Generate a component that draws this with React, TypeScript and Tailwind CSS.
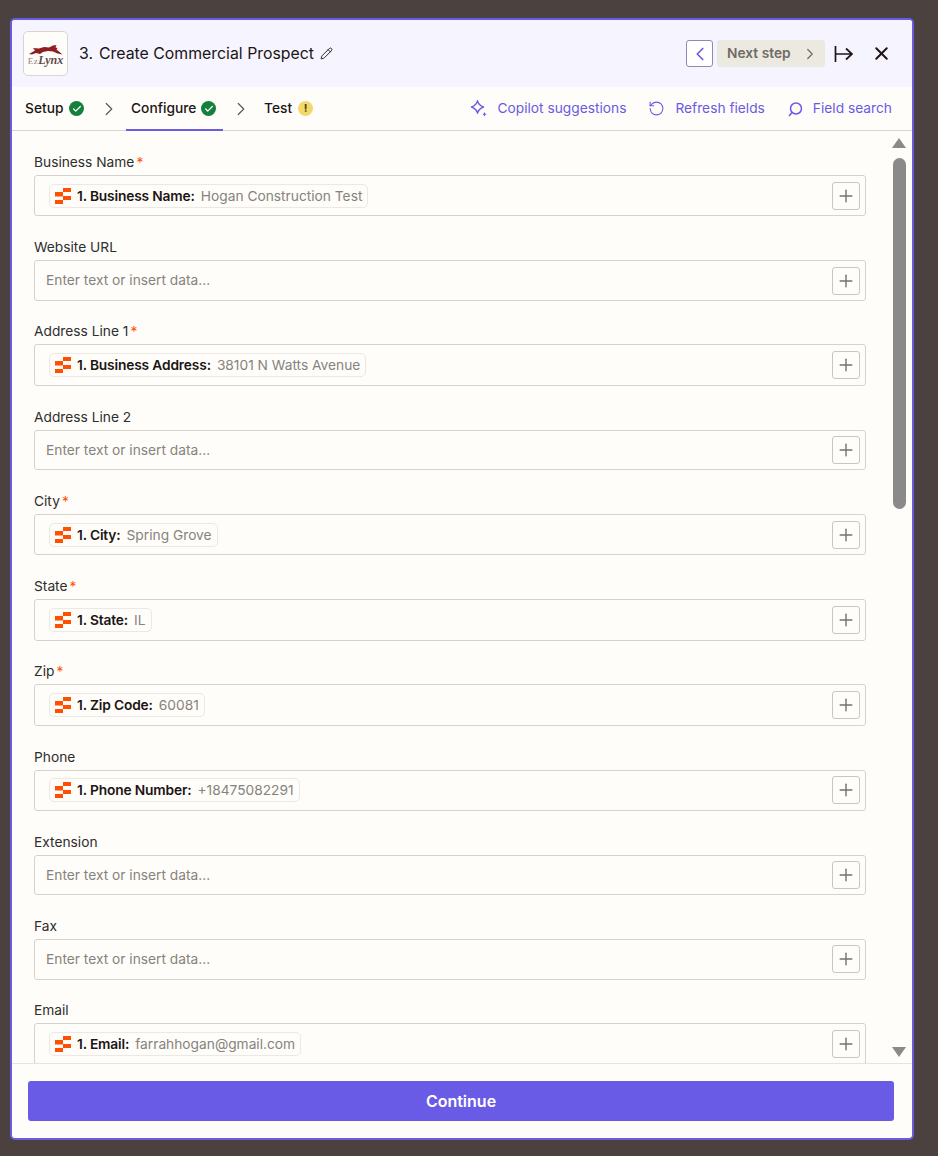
import React from 'react';
import { ChevronLeft, ChevronRight, Check, Pencil, Plus, RotateCcw, X } from 'lucide-react';

type Field = {
  label: string;
  required?: boolean;
  chip?: string;
  value?: string;
};

const fields: Field[] = [
  { label: 'Business Name', required: true, chip: '1. Business Name:', value: 'Hogan Construction Test' },
  { label: 'Website URL' },
  { label: 'Address Line 1', required: true, chip: '1. Business Address:', value: '38101 N Watts Avenue' },
  { label: 'Address Line 2' },
  { label: 'City', required: true, chip: '1. City:', value: 'Spring Grove' },
  { label: 'State', required: true, chip: '1. State:', value: 'IL' },
  { label: 'Zip', required: true, chip: '1. Zip Code:', value: '60081' },
  { label: 'Phone', chip: '1. Phone Number:', value: '+18475082291' },
  { label: 'Extension' },
  { label: 'Fax' },
  { label: 'Email', chip: '1. Email:', value: 'farrahhogan@gmail.com' },
];

const AppMark = () => (
  <svg width="16" height="16" viewBox="0 0 16 16" className="shrink-0">
    <path fill="#ff4f00" d="M8 0h8v4H8zM0 4h8v4.5H0zM8 8h8v4H8zM0 12h8v4H0z" />
  </svg>
);

const StatusOk = () => (
  <span className="flex h-[15px] w-[15px] items-center justify-center rounded-full bg-[#14803c]">
    <Check size={10} strokeWidth={3} className="text-white" />
  </span>
);

const Logo = () => (
  <div className="flex h-[45px] w-[45px] shrink-0 flex-col items-center justify-center rounded-[5px] border border-[#d8d5cf] bg-[#fffdf9] pt-[5px]">
    <svg width="34" height="10" viewBox="0 0 34 10">
      <path
        fill="#8f1d22"
        d="M0 9 6 5.500 4 3 10 3.500 15 2 20 2.500 24 .5 27.500 0 26.500 2.500 28.500 3 27.500 4.500 30 6.500 33.500 9.500 28.500 8.500 24 6.500 19 6 14 7 11 9 7 8 3 9.500Z"
      />
    </svg>
    <div className="mt-[-2px] font-['Liberation_Serif',serif] leading-[11px]">
      <span className="text-[9px] tracking-[0.5px] text-[#8a8684]">Ez</span>
      <span className="text-[12px] font-bold italic text-[#5f4b4c]">Lynx</span>
    </div>
  </div>
);

const FieldRow = ({ field }: { field: Field }) => (
  <div className={field.chip ? 'h-[85.25px] shrink-0' : 'h-[84.2px] shrink-0'}>
    <div className="flex h-[20px] items-center text-[13.75px] leading-[20px] text-[#2d2e2e]">
      {field.label}
      {field.required && <span className="ml-[2px] text-[#ff4f00]">*</span>}
    </div>
    <div
      className={`mt-[3px] flex items-center justify-between rounded-[3px] border border-[#d6d3cc] bg-[#fffdf9] pl-[11px] pr-[5px] ${
        field.chip ? 'h-[41.4px]' : 'h-[40.5px]'
      }`}
    >
      {field.chip ? (
        <div className="ml-[3px] flex h-[24px] items-center gap-[6px] rounded-[5px] border border-[#ebe9e3] px-[5px] text-[13.75px] leading-[20px]">
          <AppMark />
          <span className="font-semibold tracking-[-0.15px] text-[#201515]">{field.chip}</span>
          <span className="text-[#86837e]">{field.value}</span>
        </div>
      ) : (
        <span className="text-[13.75px] text-[#86837e]">Enter text or insert data...</span>
      )}
      <button className="flex h-[28px] w-[28px] items-center justify-center rounded-[3px] border border-[#c9c6bf] bg-[#fffdf9]">
        <Plus size={20} strokeWidth={1.7} className="text-[#75726d]" />
      </button>
    </div>
  </div>
);

export default function App() {
  return (
    <div className="h-[1156px] w-[938px] overflow-hidden bg-[#4b4240] pb-[16px] pl-[10px] pr-[24px] pt-[18px] font-['Inter',sans-serif]">
      <div className="flex h-[1122px] flex-col overflow-hidden rounded-[5px] border-2 border-[#6a5be2] bg-[#fffdf9]">
        <header className="flex h-[67px] shrink-0 items-center bg-[#f6f4ff] pl-[11px] pr-[20px]">
          <Logo />
          <div className="ml-[11px] flex items-center text-[15.85px] text-[#201515]">
            <span>3.</span>
            <span className="ml-[6px]">Create Commercial Prospect</span>
            <Pencil size={13} strokeWidth={1.7} className="ml-[6px]" />
          </div>
          <div className="ml-auto flex items-center">
            <button className="flex h-[27px] w-[27px] items-center justify-center rounded-[3px] border border-[#8f8ab5] bg-white">
              <ChevronLeft size={22} strokeWidth={1.8} className="text-[#6a5be2]" />
            </button>
            <div className="ml-[4px] flex h-[27px] w-[108px] items-center rounded-[3px] bg-[#ece9e1] pl-[10px] text-[13.75px] font-semibold text-[#6f6b65]">
              Next step
              <ChevronRight size={18} strokeWidth={1.6} className="ml-[10px]" />
            </div>
            <svg width="20" height="18" viewBox="0 0 20 18" fill="none" stroke="#201515" strokeWidth="1.7" className="ml-[9px]">
              <path d="M1.500 1v16M2 9h16M12 3.500 18 9l-6 5.500" />
            </svg>
            <X size={21} strokeWidth={2.3} className="ml-[17px] text-[#201515]" />
          </div>
        </header>

        <nav className="flex h-[44px] shrink-0 items-center border-b border-[#d9d6cf] pl-[13px] pr-[20px] text-[13.75px]">
          <span className="w-[38px] font-medium text-[#201515]">Setup</span>
          <span className="ml-[6px]"><StatusOk /></span>
          <ChevronRight size={22} strokeWidth={1.3} className="ml-[14px] text-[#5c5a56]" />
          <div className="relative ml-[6px] flex h-full items-center pl-[5px] pr-[7px]">
            <span className="w-[65px] whitespace-nowrap font-medium text-[#201515]">Configure</span>
            <span className="ml-[5px]"><StatusOk /></span>
            <span className="absolute bottom-[-1px] left-0 h-[2px] w-full bg-[#6a5be2]" />
          </div>
          <ChevronRight size={22} strokeWidth={1.3} className="ml-[7px] text-[#5c5a56]" />
          <span className="ml-[12px] w-[28px] font-medium text-[#201515]">Test</span>
          <span className="ml-[6px] flex h-[15px] w-[15px] items-center justify-center rounded-full bg-[#f3d86b] text-[11px] font-bold leading-none text-[#4d3f10]">!</span>
          <div className="ml-auto flex items-center text-[#6a5be2]">
            <svg width="17" height="17" viewBox="0 0 17 17" fill="none" stroke="currentColor" strokeWidth="1.4">
              <path d="M7.500.8Q8.500 5 13.500 7Q8.500 9 7.500 13.200Q6.500 9 1.500 7Q6.500 5 7.500.8Z" strokeLinejoin="round" />
              <path d="M14.500 12.500v3.500M12.800 14.200h3.400" strokeWidth="1.100" />
            </svg>
            <span className="ml-[10px]">Copilot suggestions</span>
            <RotateCcw size={17} strokeWidth={1.5} className="ml-[22px]" />
            <span className="ml-[10px]">Refresh fields</span>
            <svg width="15" height="16" viewBox="0 0 15 16" fill="none" stroke="currentColor" strokeWidth="1.500" className="ml-[23px]">
              <circle cx="8" cy="7.500" r="5.500" />
              <path d="M4 11.500 1 15" />
            </svg>
            <span className="ml-[10px]">Field search</span>
          </div>
        </nav>

        <div className="flex min-h-0 flex-1">
          <div className="flex min-w-0 flex-1 flex-col overflow-hidden pl-[22px] pr-[19px] pt-[21px]">
            {fields.map((field) => (
              <FieldRow key={field.label} field={field} />
            ))}
          </div>
          <div className="flex w-[27px] shrink-0 flex-col items-center pl-[1px] pt-[7px]">
            <div className="h-0 w-0 border-x-[7.5px] border-b-[10px] border-x-transparent border-b-[#8a8a8a]" />
            <div className="mt-[10px] h-[351px] w-[13px] rounded-[7px] bg-[#8a8a8a]" />
            <div className="mb-[6px] mt-auto h-0 w-0 border-x-[7.5px] border-t-[10px] border-x-transparent border-t-[#8a8a8a]" />
          </div>
        </div>

        <footer className="shrink-0 border-t border-[#e6e4de] pb-[17px] pl-[16px] pr-[18px] pt-[17px]">
          <button className="flex h-[40px] w-full items-center justify-center rounded-[3px] bg-[#6a5be6] text-[16px] font-semibold text-white">
            Continue
          </button>
        </footer>
      </div>
    </div>
  );
}
